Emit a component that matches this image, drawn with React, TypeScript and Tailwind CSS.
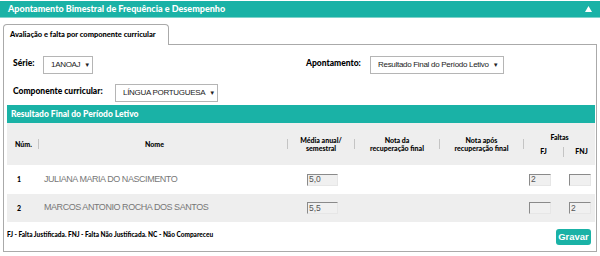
import React from "react";

// Apontamento bimestral - resultado final
const teal = "bg-[#1ab2a6]";

interface Aluno {
  num: number;
  nome: string;
  media: string;
  fj: string;
  fnj: string;
}

const alunos: Aluno[] = [
  { num: 1, nome: "JULIANA MARIA DO NASCIMENTO", media: "5,0", fj: "2", fnj: "" },
  { num: 2, nome: "MARCOS ANTONIO ROCHA DOS SANTOS", media: "5,5", fj: "", fnj: "2" },
];

const cols = "grid grid-cols-[31px_249px_67px_85px_84px_40px_32px]";

const Sep = () => <div className="w-px h-[10px] bg-[#c4c4c4] shrink-0" />;

const Select = ({ value, width }: { value: string; width: string }) => (
  <div
    className={`${width} h-[18px] border border-[#b5b5b5] bg-white flex items-center justify-between pl-[7px] pr-[5px] whitespace-nowrap font-['Liberation_Sans',Arial,sans-serif] text-[8px] text-[#222] tracking-[-0.3px]`}
  >
    <span>{value}</span>
    <span className="text-[6px] ml-[4px]">▼</span>
  </div>
);

const Field = ({ value, width }: { value: string; width: string }) => (
  <div
    className={`${width} h-[12px] border border-t-[#8a8a8a] border-l-[#8a8a8a] border-r-[#e6e6e6] border-b-[#e6e6e6] bg-[#f0f0f0] flex items-center pl-px font-['Liberation_Sans',Arial,sans-serif] text-[8.5px] leading-none text-[#555]`}
  >
    {value}
  </div>
);

const HeadCell = ({ children, extra = "" }: { children: React.ReactNode; extra?: string }) => (
  <div className="flex items-center">
    <Sep />
    <div className={`flex-1 text-center leading-[8.5px] ${extra}`}>{children}</div>
  </div>
);

export default function App() {
  return (
    <div className="w-[600px] h-[256px] bg-white font-['Lato',sans-serif] text-black overflow-hidden">
      {/* Header */}
      <div className={`mt-px h-[17px] ${teal} border-b border-[#7fd2ca] flex items-center justify-between pl-[8px] pr-[8px]`}>
        <span className="text-white font-black text-[9px]">
          Apontamento Bimestral de Frequência e Desempenho
        </span>
        <svg width="7" height="6" viewBox="0 0 7 6">
          <polygon points="3.5,0 7,6 0,6" fill="#fff" />
        </svg>
      </div>

      {/* Tabs */}
      <div className="mt-[6px] ml-[3px] mr-[3px] flex">
        <div className="w-[166px] h-[21px] border border-b-0 border-[#aaaaaa] rounded-t-[4px] bg-white flex items-center pl-[6px] font-black text-[7.5px]">
          Avaliação e falta por componente curricular
        </div>
        <div className="flex-1 border-b border-[#aaaaaa]" />
      </div>

      {/* Panel */}
      <div className="mx-[3px] h-[207px] border border-t-0 border-[#aaaaaa] pl-[3px] pr-px">
        <div className="pt-[11px] flex items-center">
          <span className="ml-[6px] w-[30px] font-black text-[8.5px] -mt-[4px]">Série:</span>
          <Select value="1ANOAJ" width="w-[50px]" />
          <span className="ml-[213px] w-[64px] font-black text-[8.5px] -mt-[4px]">Apontamento:</span>
          <Select value="Resultado Final do Período Letivo" width="w-[134px]" />
        </div>
        <div className="mt-[10px] flex items-center">
          <span className="ml-[6px] w-[102px] font-black text-[8.5px] -mt-[3px]">Componente curricular:</span>
          <Select value="LÍNGUA PORTUGUESA" width="w-[103px]" />
        </div>

        {/* Resultado */}
        <div className={`mt-[3px] h-[18px] ${teal} flex items-center pl-[4px] text-white font-black text-[8.5px]`}>
          Resultado Final do Período Letivo
        </div>

        <div className={`${cols} h-[42px] bg-[#eeeeee] font-black text-[7px]`}>
          <div className="flex items-center pl-[8px]">Núm.</div>
          <HeadCell extra="pr-[17px]">Nome</HeadCell>
          <HeadCell>
            Média anual/
            <br />
            semestral
          </HeadCell>
          <HeadCell>
            Nota da
            <br />
            recuperação final
          </HeadCell>
          <HeadCell>
            Nota após
            <br />
            recuperação final
          </HeadCell>
          <div className="col-span-2 flex items-center">
            <Sep />
            <div className="flex-1 h-full flex flex-col">
              <div className="h-[19px] flex items-end justify-center">Faltas</div>
              <div className="flex-1 flex items-center pb-[4px]">
                <div className="w-[39px] text-center">FJ</div>
                <Sep />
                <div className="flex-1 text-center pl-[4px]">FNJ</div>
              </div>
            </div>
          </div>
        </div>

        {alunos.map((a, i) => (
          <div
            key={a.num}
            className={`${cols} ${i === 0 ? "h-[29px] bg-white" : "h-[28px] bg-[#eeeeee]"} items-center`}
          >
            <div className="pl-[10px] font-black text-[7px]">{a.num}</div>
            <div className="pl-[6px] font-['Liberation_Sans',Arial,sans-serif] text-[9px] tracking-[-0.45px] text-[#777]">
              {a.nome}
            </div>
            <div className="pl-[20px]">
              <Field value={a.media} width="w-[31px]" />
            </div>
            <div />
            <div />
            <div className="pl-[6px]">
              <Field value={a.fj} width="w-[22px]" />
            </div>
            <div className="pl-[6px]">
              <Field value={a.fnj} width="w-[22px]" />
            </div>
          </div>
        ))}

        <div className="flex justify-between pr-[4px]">
          <span className="mt-[8px] font-black text-[6.5px]">
            FJ - Falta Justificada. FNJ - Falta Não Justificada. NC - Não Compareceu
          </span>
          <button className={`mt-[7px] w-[35px] h-[16px] ${teal} rounded-[3px] text-white font-bold text-[9.5px] font-['Liberation_Sans',Arial,sans-serif] flex items-center justify-center`}>
            Gravar
          </button>
        </div>
      </div>
    </div>
  );
}
